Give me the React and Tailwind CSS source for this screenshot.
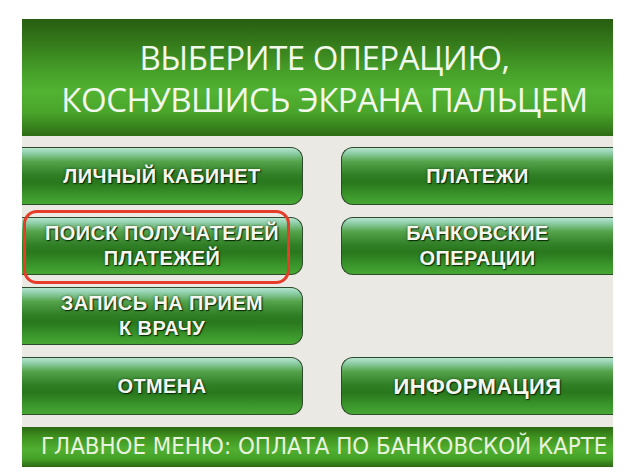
import React from "react";

const btnBase =
  "relative flex items-center justify-center text-center h-[58px] border-y border-[#2d4a2a] text-[20px] leading-[25px] tracking-[0.4px] font-bold text-[#f6f6f0] [text-shadow:1px_1px_1px_rgba(0,35,0,0.9),0_0_3px_rgba(0,40,0,0.6)] bg-[linear-gradient(to_bottom,#b6e5cf_0%,#93d1ae_8%,#55a44c_24%,#307e25_48%,#2a781d_62%,#3b982c_86%,#46a733_100%)]";

function LeftButton({ children, highlight }) {
  return (
    <div className={`${btnBase} border-r rounded-r-[12px]`}>
      <span>{children}</span>
      {highlight && (
        <div className="absolute left-[1px] top-[-8px] w-[267px] h-[74px] border-[3px] border-[#e63d2b] rounded-[14px]" />
      )}
    </div>
  );
}

function RightButton({ children, className = "" }) {
  return (
    <div className={`${btnBase} border-l rounded-l-[12px] ${className}`}>
      <span>{children}</span>
    </div>
  );
}

export default function App() {
  return (
    <div className="w-[640px] h-[475px] bg-white pt-[19px] pl-[22px] overflow-hidden" style={{ fontFamily: '"Liberation Sans", Arial, sans-serif' }}>
      <div className="w-[591px] flex flex-col">
        {/* Header */}
        <div className="h-[117px] flex flex-col items-center justify-center pl-[14px] pt-[2px] bg-[linear-gradient(to_bottom,#285e11_0%,#337619_18%,#46a029_45%,#52b232_62%,#49a52b_80%,#2d6c14_100%)]">
          <div
            className="text-[33px] leading-[42px] text-[#f2f8ec] tracking-[-0.5px]"
            style={{ fontFamily: '"Open Sans", "Noto Sans", sans-serif' }}
          >
            <div className="text-center">ВЫБЕРИТЕ ОПЕРАЦИЮ,</div>
            <div className="text-center">КОСНУВШИСЬ ЭКРАНА ПАЛЬЦЕМ</div>
          </div>
        </div>

        {/* Buttons */}
        <div className="bg-[#ebe9e4] pt-[11px] pb-[12px] grid grid-cols-[281px_272px] gap-x-[38px] gap-y-[12px]">
          <LeftButton>ЛИЧНЫЙ КАБИНЕТ</LeftButton>
          <RightButton>ПЛАТЕЖИ</RightButton>
          <LeftButton highlight>
            ПОИСК ПОЛУЧАТЕЛЕЙ
            <br />
            ПЛАТЕЖЕЙ
          </LeftButton>
          <RightButton>
            БАНКОВСКИЕ
            <br />
            ОПЕРАЦИИ
          </RightButton>
          <LeftButton>
            ЗАПИСЬ НА ПРИЕМ
            <br />К ВРАЧУ
          </LeftButton>
          <div />
          <LeftButton>ОТМЕНА</LeftButton>
          <RightButton className="text-[22px]">ИНФОРМАЦИЯ</RightButton>
        </div>

        {/* Footer */}
        <div className="h-[40px] flex items-center pl-[19px] bg-[linear-gradient(to_bottom,#2c6a13_0%,#3f921f_25%,#50b030_55%,#45a028_80%,#2b6812_100%)]">
          <span
            className="text-[23.8px] leading-none text-[#e8f3de] whitespace-nowrap"
            style={{ fontFamily: '"Liberation Sans Narrow", "Arial Narrow", "DejaVu Sans Condensed", sans-serif' }}
          >
            ГЛАВНОЕ МЕНЮ: ОПЛАТА ПО БАНКОВСКОЙ КАРТЕ
          </span>
        </div>
      </div>
    </div>
  );
}
